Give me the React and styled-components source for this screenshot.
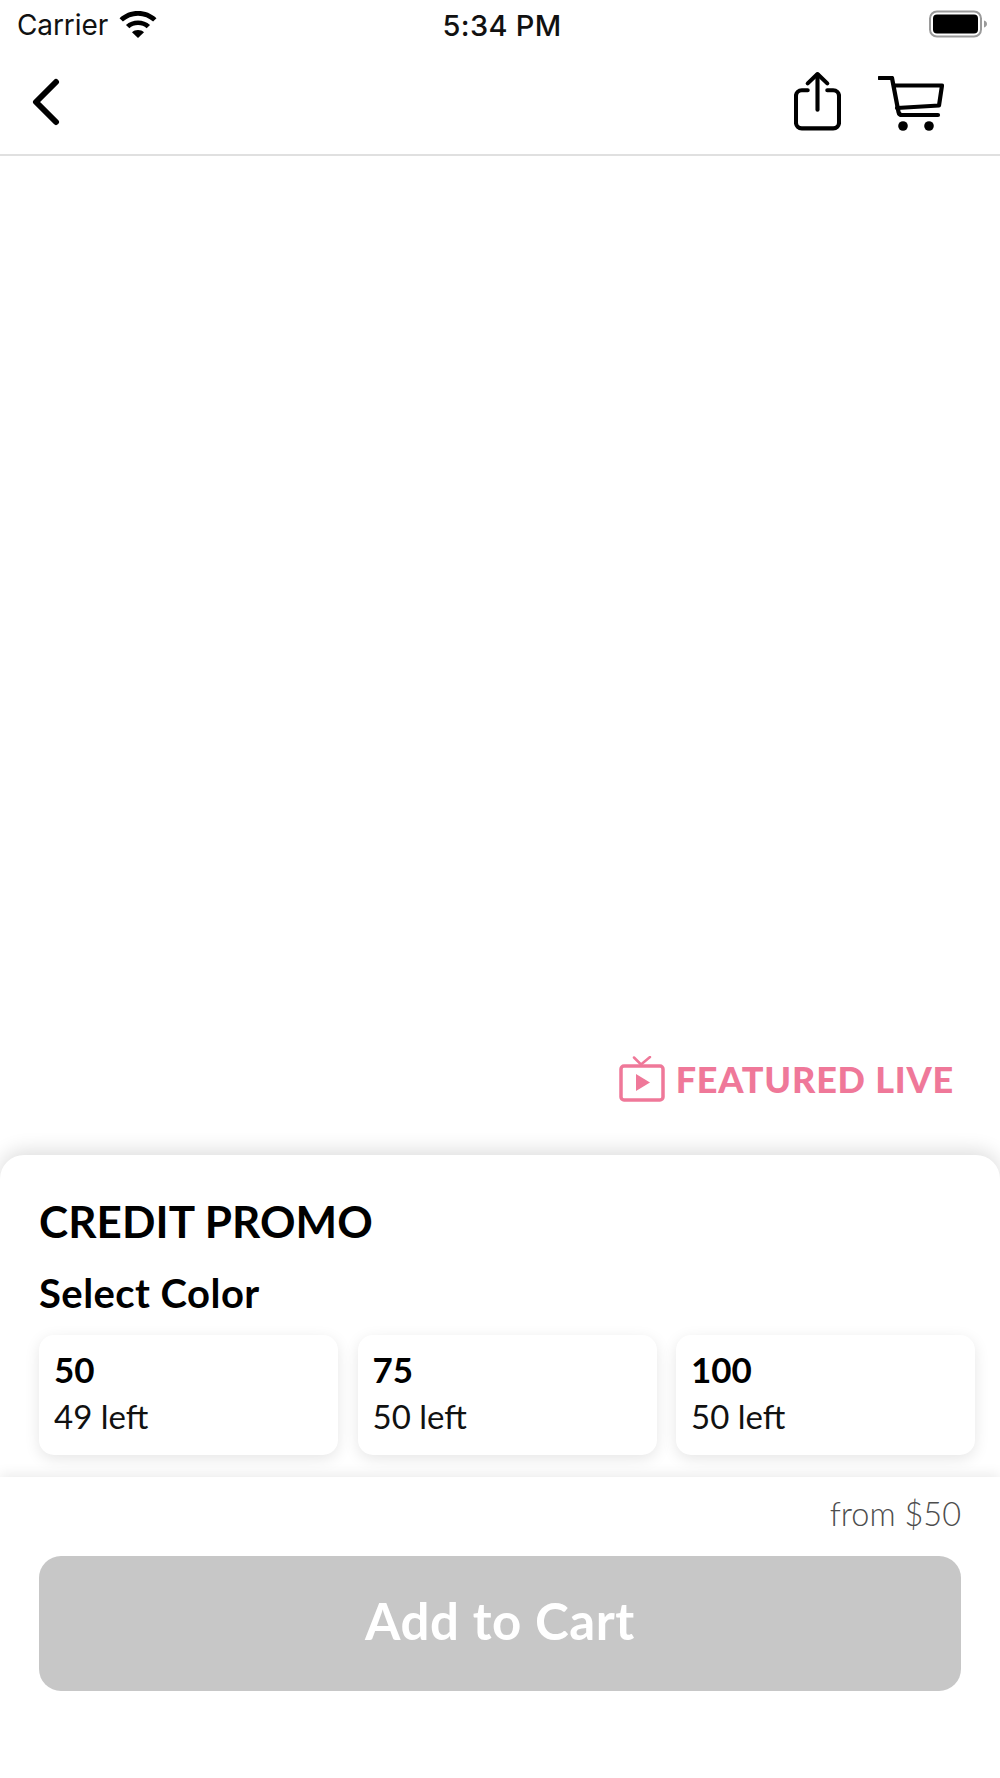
import React from "react";
import styled, { createGlobalStyle } from "styled-components";

const Global = createGlobalStyle`
  html, body { margin: 0; padding: 0; background: #fff; }
  * { box-sizing: border-box; }
`;
const Page = styled.div`
  width: 1000px; height: 1778px; display: flex; flex-direction: column;
  background: #fff; overflow: hidden; font-family: Lato, "Noto Sans", sans-serif; color: #000;
`;
const StatusBar = styled.div`
  height: 47px; flex: none; display: grid; grid-template-columns: 1fr auto 1fr; align-items: center;
  padding: 3px 13px 0 17px; font-family: Inter, "Liberation Sans", sans-serif;
`;
const Carrier = styled.div`
  display: flex; align-items: center; gap: 11px; font-size: 28px; color: #111; letter-spacing: -0.1px;
`;
const Clock = styled.div` font-size: 29px; font-weight: 500; color: #111; letter-spacing: 0.3px; `;
const Battery = styled.div` justify-self: end; display: flex; margin-top: -3px; `;
const NavBar = styled.div`
  height: 109px; flex: none; display: flex; align-items: center; justify-content: space-between;
  padding: 0 56px 0 30px; border-bottom: 2px solid #e0e0e0;
`;
const NavActions = styled.div` display: flex; align-items: center; gap: 37px; `;
const Hero = styled.div`
  flex: 1; display: flex; justify-content: flex-end; align-items: flex-end; padding: 0 46px 53px 0;
`;
const Featured = styled.div`
  display: flex; align-items: center; gap: 11px; color: #ef7899; font-size: 36px; font-weight: 900; line-height: 46px; letter-spacing: 0.8px;
`;
const Sheet = styled.div`
  height: 322px; flex: none; border-radius: 24px 24px 0 0; background: #fff; padding: 38px 25px 0 39px;
  box-shadow: 0 -4px 20px rgba(0,0,0,0.14); position: relative;
`;
const Title = styled.h1` margin: 0; font-size: 44px; font-weight: 700; line-height: 56px; letter-spacing: 0.1px; `;
const Subtitle = styled.h2` margin: 19px 0 0; font-size: 40px; font-weight: 700; line-height: 50px; letter-spacing: 0.45px; `;
const Options = styled.div` display: grid; grid-template-columns: repeat(3, 299px); gap: 19px; column-gap: 19.5px; margin-top: 17px; `;
const Option = styled.div`
  height: 120px; border-radius: 15px; background: #fff; padding: 12px 15px;
  box-shadow: 0 4px 15px rgba(0,0,0,0.1);
`;
const OptionName = styled.div` font-size: 35px; font-weight: 700; line-height: 44px; `;
const OptionStock = styled.div` font-size: 33px; font-weight: 400; line-height: 44px; margin-top: 3px; color: #111; `;
const Footer = styled.div`
  height: 301px; flex: none; background: #fff; position: relative; padding: 0 39px;
  box-shadow: 0 -3px 12px rgba(0,0,0,0.08);
`;
const Price = styled.div` text-align: right; font-size: 32.5px; line-height: 44px; margin-top: 15px; color: #4d4d4d; font-weight: 300; `;
const AddButton = styled.button`
  display: block; width: 100%; height: 135px; margin-top: 20px; padding: 0 0 6px; border: 0; border-radius: 22px;
  background: #c7c7c7; color: #fff; font-family: inherit; font-size: 51px; font-weight: 700; letter-spacing: 0.6px;
`;
const BackGlyph = styled.svg` margin-top: 2px; `;
const CartGlyph = styled.svg` margin-top: 6px; `;

const Wifi = () => (
  <svg width="38" height="28" viewBox="0 0 36 28" preserveAspectRatio="none" fill="#000">
    <path d="M18 0C11.2 0 5.2 2.6.5 7.2l3.2 3.3C7.5 6.9 12.500 4.700 18 4.700s10.500 2.200 14.300 5.800l3.200-3.300C30.800 2.600 24.800 0 18 0z" />
    <path d="M18 9.500c-4.400 0-8.400 1.700-11.400 4.500l3.200 3.300c2.200-2 5-3.200 8.200-3.200s6 1.200 8.200 3.200l3.200-3.300c-3-2.800-7-4.500-11.400-4.500z" />
    <path d="M18 19c-2.200 0-4.200.8-5.700 2.200L18 27l5.700-5.800C22.200 19.800 20.200 19 18 19z" />
  </svg>
);
const BatteryIcon = () => (
  <svg width="58" height="28" viewBox="0 0 58 28">
    <rect x="1" y="1.500" width="51" height="25" rx="7" fill="none" stroke="#9a9a9a" strokeWidth="2" />
    <rect x="4" y="4.500" width="45" height="19" rx="4" fill="#000" />
    <path d="M55 10.500c1.800.6 3 1.900 3 3.500s-1.200 2.900-3 3.500z" fill="#9a9a9a" />
  </svg>
);
const BackIcon = () => (
  <BackGlyph width="32" height="48" viewBox="0 0 32 48" fill="none" stroke="#000" strokeWidth="6" strokeLinecap="round" strokeLinejoin="round">
    <path d="M26 4 L6 24 L26 44" />
  </BackGlyph>
);
const ShareIcon = () => (
  <svg width="47" height="60" viewBox="0 0 48 60" fill="none" stroke="#000" strokeWidth="4.200" strokeLinecap="round" strokeLinejoin="round">
    <path d="M14 19H8a6 6 0 0 0-6 6v27a6 6 0 0 0 6 6h32a6 6 0 0 0 6-6V25a6 6 0 0 0-6-6h-6" />
    <path d="M24 39V3" />
    <path d="M14 12 L24 2.500 L34 12" />
  </svg>
);
const CartIcon = () => (
  <CartGlyph width="66" height="56" viewBox="0 0 66 56">
    <g fill="none" stroke="#000" strokeWidth="4.200" strokeLinecap="round" strokeLinejoin="round">
      <path d="M1.500 2H14l6.500 34c.4 2 1.500 3 3.500 3h36" />
      <path d="M16 9.500h48l-3 20L19 32" />
    </g>
    <circle cx="25" cy="50" r="4.800" fill="#000" />
    <circle cx="51" cy="50" r="4.800" fill="#000" />
  </CartGlyph>
);
const TvIcon = () => (
  <svg width="46" height="46" viewBox="0 0 46 46" fill="none" stroke="#ef7899" strokeLinecap="round" strokeLinejoin="round">
    <path d="M15 1.500 L22 8.500 L31 1" strokeWidth="2.500" />
    <rect x="2" y="10" width="42" height="34" rx="3" strokeWidth="3.500" />
    <path d="M17 18 L31 26.500 L17 35 Z" fill="#ef7899" stroke="none" />
  </svg>
);

const options = [
  { name: "50", stock: "49 left" },
  { name: "75", stock: "50 left" },
  { name: "100", stock: "50 left" },
];

export default function App() {
  return (
    <Page>
      <Global />
      <StatusBar>
        <Carrier>Carrier<Wifi /></Carrier>
        <Clock>5:34 PM</Clock>
        <Battery><BatteryIcon /></Battery>
      </StatusBar>
      <NavBar>
        <BackIcon />
        <NavActions><ShareIcon /><CartIcon /></NavActions>
      </NavBar>
      <Hero>
        <Featured><TvIcon />FEATURED LIVE</Featured>
      </Hero>
      <Sheet>
        <Title>CREDIT PROMO</Title>
        <Subtitle>Select Color</Subtitle>
        <Options>
          {options.map((o) => (
            <Option key={o.name}>
              <OptionName>{o.name}</OptionName>
              <OptionStock>{o.stock}</OptionStock>
            </Option>
          ))}
        </Options>
      </Sheet>
      <Footer>
        <Price>from $50</Price>
        <AddButton>Add to Cart</AddButton>
      </Footer>
    </Page>
  );
}
